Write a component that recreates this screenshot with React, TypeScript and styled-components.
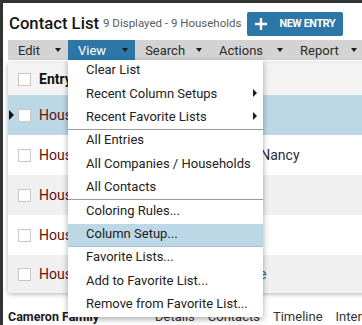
import React from 'react';
import styled, { createGlobalStyle } from 'styled-components';

const GlobalStyle = createGlobalStyle`
  html, body {
    margin: 0;
    padding: 0;
    background: #333333;
    overflow: hidden;
    font-family: Roboto, "Liberation Sans", Arial, sans-serif;
  }
`;

const Panel = styled.div`
  margin: 3px 0 0 3px;
  width: 420px;
  height: 340px;
  background: #ffffff;
  padding: 0 0 0 5px;
  box-sizing: border-box;
`;

const TitleRow = styled.div`
  display: flex;
  align-items: center;
  height: 37px;
`;

const Title = styled.h1`
  flex-shrink: 0;
  margin: 0 0 0 1px;
  font-size: 16.7px;
  font-weight: 500;
  color: #151515;
  padding-top: 3px;
  white-space: nowrap;
`;

const Subtitle = styled.span`
  flex-shrink: 0;
  margin-left: 4px;
  font-size: 11.5px;
  color: #5a5a5a;
  padding-top: 3px;
  white-space: nowrap;
`;

const NewButton = styled.button`
  flex-shrink: 0;
  margin: 4px 0 0 6px;
  height: 24px;
  width: 96px;
  border: none;
  border-radius: 2px;
  background: #2c77a8;
  color: #ffffff;
  font-family: Roboto, "Liberation Sans", Arial, sans-serif;
  font-size: 10.8px;
  font-weight: 700;
  letter-spacing: -0.4px;
  white-space: nowrap;
  display: flex;
  align-items: center;
  gap: 12px;
  padding: 0 0 0 8px;
`;

const MenuBar = styled.div`
  display: flex;
  height: 20px;
  background: #d3d3d3;
`;

const MenuItem = styled.div<{ $active?: boolean; $gap: number }>`
  position: relative;
  flex-shrink: 0;
  display: flex;
  align-items: center;
  gap: ${(p) => p.$gap}px;
  padding: 0 7px 0 10px;
  font-size: 13px;
  color: ${(p) => (p.$active ? '#ffffff' : '#2a2a2a')};
  background: ${(p) => (p.$active ? '#2c77a8' : 'transparent')};
`;

const Caret = styled.span`
  width: 0;
  height: 0;
  border-left: 3.5px solid transparent;
  border-right: 3.5px solid transparent;
  border-top: 4px solid #1b1b1b;
`;

const Dropdown = styled.div`
  position: absolute;
  top: 100%;
  left: 0;
  width: 195px;
  background: #ffffff;
  box-shadow: 0 2px 6px rgba(0, 0, 0, 0.35);
  z-index: 10;
  color: #222222;
`;

const DropItem = styled.div<{ $sep?: boolean; $hl?: boolean }>`
  display: flex;
  align-items: center;
  justify-content: space-between;
  height: 23.4px;
  box-sizing: border-box;
  padding: 0 6px 3px 18px;
  font-size: 13px;
  white-space: nowrap;
  background: ${(p) => (p.$hl ? '#bcd8e6' : '#ffffff')};
  border-bottom: 1px solid ${(p) => (p.$sep ? '#9a9a9a' : p.$hl ? '#a9c0cc' : 'transparent')};
`;

const SubArrow = styled.span`
  width: 0;
  height: 0;
  border-top: 4px solid transparent;
  border-bottom: 4px solid transparent;
  border-left: 4px solid #1b1b1b;
`;

const Grid = styled.div`
  margin-top: 3px;
  box-shadow: 0 1px 5px rgba(0, 0, 0, 0.3);
`;

const Row = styled.div<{ $bg: string; $h: number }>`
  display: grid;
  grid-template-columns: 31px 181px 1fr;
  align-items: center;
  height: ${(p) => p.$h}px;
  background: ${(p) => p.$bg};
`;

const MarkerCell = styled.div`
  display: flex;
  align-items: center;
  gap: 4px;
  padding-left: 1px;
`;

const Marker = styled.span<{ $on?: boolean }>`
  width: 0;
  height: 0;
  border-top: 5px solid transparent;
  border-bottom: 5px solid transparent;
  border-left: 5px solid ${(p) => (p.$on ? '#111111' : 'transparent')};
`;

const Check = styled.span`
  width: 13px;
  height: 13px;
  box-sizing: border-box;
  border: 1px solid #c8c8c8;
  background: #ffffff;
`;

const Cell = styled.div<{ $color?: string; $bold?: boolean }>`
  font-size: 14px;
  white-space: nowrap;
  overflow: hidden;
  color: ${(p) => p.$color || '#222222'};
  font-weight: ${(p) => (p.$bold ? 700 : 400)};
`;

const Footer = styled.div`
  display: flex;
  align-items: center;
  margin-top: 16px;
  font-size: 13px;
  color: #333333;
  white-space: nowrap;
`;

const FamilyName = styled.span`
  flex-shrink: 0;
  font-weight: 700;
  font-size: 12.5px;
  color: #1a1a1a;
  width: 147px;
`;

const Tab = styled.span`
  flex-shrink: 0;
  margin-right: 13px;
`;

const PlusIcon = () => (
  <svg width="12" height="12" viewBox="0 0 12 12">
    <path d="M6 0v12M0 6h12" stroke="#ffffff" strokeWidth="2.4" />
  </svg>
);

const menus = [
  { label: 'Edit', gap: 15 },
  { label: 'View', gap: 16, active: true },
  { label: 'Search', gap: 11 },
  { label: 'Actions', gap: 14 },
  { label: 'Report', gap: 12 },
];

const viewItems: { label: string; sub?: boolean; sep?: boolean; hl?: boolean }[] = [
  { label: 'Clear List' },
  { label: 'Recent Column Setups', sub: true },
  { label: 'Recent Favorite Lists', sub: true, sep: true },
  { label: 'All Entries' },
  { label: 'All Companies / Households' },
  { label: 'All Contacts', sep: true },
  { label: 'Coloring Rules...' },
  { label: 'Column Setup...', hl: true },
  { label: 'Favorite Lists...' },
  { label: 'Add to Favorite List...' },
  { label: 'Remove from Favorite List...' },
];

const rows = [
  { bg: '#bcd8e6', sel: true, name: 'Household', other: '', otherColor: '#222' },
  { bg: '#ffffff', name: 'Household', other: 'Bob & Nancy', otherColor: '#2b2b3a' },
  { bg: '#f0f0f0', name: 'Household', other: '', otherColor: '#222' },
  { bg: '#ffffff', name: 'Household', other: '', otherColor: '#222' },
  { bg: '#f0f0f0', name: 'Household', other: 'Maggie', otherColor: '#1d5fa8' },
];

const App: React.FC = () => {
  return (
    <>
      <GlobalStyle />
      <Panel>
        <TitleRow>
          <Title>Contact List</Title>
          <Subtitle>9 Displayed - 9 Households</Subtitle>
          <NewButton>
            <PlusIcon />
            NEW ENTRY
          </NewButton>
        </TitleRow>

        <MenuBar>
          {menus.map((m) => (
            <MenuItem key={m.label} $active={m.active} $gap={m.gap}>
              {m.label}
              <Caret />
              {m.active && (
                <Dropdown>
                  {viewItems.map((it) => (
                    <DropItem key={it.label} $sep={it.sep} $hl={it.hl}>
                      {it.label}
                      {it.sub && <SubArrow />}
                    </DropItem>
                  ))}
                </Dropdown>
              )}
            </MenuItem>
          ))}
        </MenuBar>

        <Grid>
          <Row $bg="#f3f3f3" $h={32}>
            <MarkerCell>
              <Marker />
              <Check />
            </MarkerCell>
            <Cell $bold $color="#111">Entry Name</Cell>
            <Cell />
          </Row>
          {rows.map((r, i) => (
            <Row key={i} $bg={r.bg} $h={i === rows.length - 1 ? 38 : 40}>
              <MarkerCell>
                <Marker $on={r.sel} />
                <Check />
              </MarkerCell>
              <Cell $color="#650d0d">{r.name}</Cell>
              <Cell $color={r.otherColor}>{r.other}</Cell>
            </Row>
          ))}
        </Grid>

        <Footer>
          <FamilyName>Cameron Family</FamilyName>
          <Tab>Details</Tab>
          <Tab>Contacts</Tab>
          <Tab>Timeline</Tab>
          <Tab>Interactions</Tab>
        </Footer>
      </Panel>
    </>
  );
};

export default App;
